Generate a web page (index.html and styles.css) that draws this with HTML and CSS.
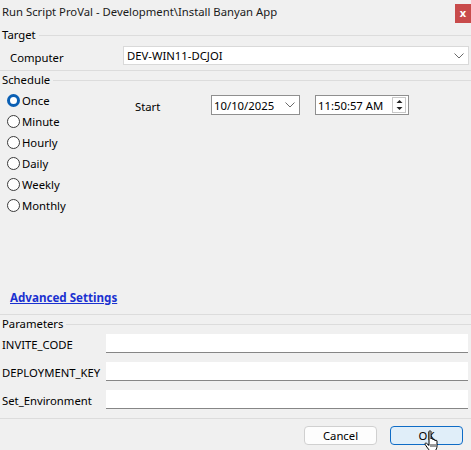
FILE: index.html
```html
<!DOCTYPE html>
<html>
<head>
<meta charset="utf-8">
<link rel="stylesheet" href="styles.css">
</head>
<body>
<div class="dialog">
  <div class="titlebar">
    <span class="title">Run Script ProVal - Development\Install Banyan App</span>
    <span class="close">x</span>
  </div>

  <div class="legend legend-target"><span>Target</span><i></i></div>
  <div class="target-row">
    <span class="lbl-computer">Computer</span>
    <div class="combo">
      <span>DEV-WIN11-DCJOI</span>
      <svg class="chev" width="10" height="6" viewBox="0 0 10 6"><path d="M0.5 0.5 L5 5 L9.5 0.5" fill="none" stroke="#6a6a6a" stroke-width="1"/></svg>
    </div>
  </div>
  <div class="sep sep-target"></div>

  <div class="legend"><span>Schedule</span><i></i></div>
  <div class="schedule">
    <div class="radios">
      <label class="radio checked"><span class="dot"></span>Once</label>
      <label class="radio"><span class="dot"></span>Minute</label>
      <label class="radio"><span class="dot"></span>Hourly</label>
      <label class="radio"><span class="dot"></span>Daily</label>
      <label class="radio"><span class="dot"></span>Weekly</label>
      <label class="radio"><span class="dot"></span>Monthly</label>
    </div>
    <div class="start-row">
      <span class="lbl-start">Start</span>
      <div class="datebox">
        <span>10/10/2025</span>
        <svg class="chev" width="10" height="6" viewBox="0 0 10 6"><path d="M0.5 0.5 L5 5 L9.5 0.5" fill="none" stroke="#6a6a6a" stroke-width="1"/></svg>
      </div>
      <div class="timebox">
        <span>11:50:57 AM</span>
        <div class="spin">
          <svg width="11" height="7" viewBox="0 0 11 7"><path d="M2.5 5 L5.5 2 L8.5 5 Z" fill="#222"/></svg>
          <svg width="11" height="7" viewBox="0 0 11 7"><path d="M2.5 2 L5.5 5 L8.5 2 Z" fill="#222"/></svg>
        </div>
      </div>
    </div>
  </div>
  <div class="adv-wrap"><a class="adv" href="#">Advanced Settings</a></div>
  <div class="sep sep-adv"></div>

  <div class="legend"><span>Parameters</span><i></i></div>
  <div class="params">
    <div class="param"><span class="plbl">INVITE_CODE</span><div class="pinput"></div></div>
    <div class="param"><span class="plbl">DEPLOYMENT_KEY</span><div class="pinput"></div></div>
    <div class="param"><span class="plbl">Set_Environment</span><div class="pinput"></div></div>
  </div>
  <div class="sep sep-params"></div>

  <div class="buttons">
    <button class="btn">Cancel</button>
    <button class="btn btn-ok">OK</button>
  </div>

  <svg class="cursor" width="20" height="22" viewBox="0 0 20 22">
    <path d="M5 1.5 C5 0.6 7 0.6 7 1.5 L7 9 C7 8 9 8 9 9 L9 10 C9 9 11 9 11 10 L11 11 C11 10 13 10 13 11 L13 16 C13 18 12 20 11 21 L6 21 C5 20 2 16 1.2 14.5 C0.6 13.5 1.6 12.5 2.6 13.3 L5 15.5 Z" fill="#fff" stroke="#000" stroke-width="1" stroke-linejoin="round"/>
    <path d="M7 14 V17 M9 14 V17 M11 14 V17" stroke="#000" stroke-width="0.8"/>
  </svg>
</div>
</body>
</html>
```

FILE: styles.css
```css
* { box-sizing: border-box; }
html, body { margin: 0; padding: 0; }
body {
  background: #f0f0f0;
  font-family: "Segoe UI", "Noto Sans", "Liberation Sans", sans-serif;
  font-size: 11.3px;
  color: #000;
  width: 471px;
  height: 450px;
  overflow: hidden;
}
.dialog { position: relative; width: 471px; height: 450px; }

.titlebar {
  height: 24px;
  display: flex;
  align-items: center;
  justify-content: space-between;
  padding-left: 2px;
}
.title { font-size: 11.3px; line-height: 16px; margin-top: -1px; color: #1a1a1a; }
.close {
  width: 16px;
  height: 19px;
  margin-top: 4px;
  align-self: flex-start;
  background: #c84b4b;
  color: #fff;
  font-weight: bold;
  font-size: 11px;
  line-height: 17px;
  text-align: center;
}

.legend {
  height: 16px;
  display: flex;
  align-items: center;
  padding-left: 2px;
  margin-top: 1px;
}
.legend-target { margin-top: 3px; }
.legend span { line-height: 16px; padding-right: 3px; }
.legend i { flex: 1; height: 1px; background: #dcdcdc; }

.sep { height: 1px; background: #dcdcdc; }

.target-row {
  display: flex;
  align-items: center;
  margin-top: 3px;
  height: 19px;
}
.lbl-computer { width: 123px; padding-left: 10px; margin-top: 4px; }
.combo {
  width: 346px;
  height: 19px;
  background: #fff;
  border: 1px solid #d9d9d9;
  display: flex;
  align-items: center;
  justify-content: space-between;
  padding: 0 4px 0 3px;
}
.combo span { line-height: 16px; }
.sep-target { margin-top: 5px; }

.schedule {
  display: flex;
  height: 192px;
}
.radios {
  width: 135px;
  padding-top: 2px;
  padding-left: 7px;
  display: flex;
  flex-direction: column;
}
.radio {
  height: 21px;
  display: flex;
  align-items: center;
  gap: 2px;
}
.dot {
  width: 13px;
  height: 13px;
  border-radius: 50%;
  border: 1px solid #3a3a3a;
  background: #fff;
  box-sizing: border-box;
}
.checked .dot {
  border: 3.5px solid #0a5fb4;
  background: #fff;
}

.start-row {
  display: flex;
  align-items: center;
  margin-top: 7px;
  height: 20px;
}
.lbl-start { width: 76px; margin-top: 2px; }
.datebox, .timebox {
  height: 20px;
  background: #fff;
  border: 1px solid #8f8f8f;
  display: flex;
  align-items: center;
  justify-content: space-between;
  padding-left: 2px;
}
.datebox { width: 89px; padding-right: 4px; }
.timebox { width: 94px; margin-left: 15px; padding-right: 2px; }
.spin {
  width: 14px;
  height: 16px;
  border: 1px solid #c8c8c8;
  display: flex;
  flex-direction: column;
  align-items: center;
  justify-content: center;
}
.spin svg { display: block; width: 11px; height: 7px; }

.adv-wrap {
  height: 34px;
  padding-left: 10px;
  display: flex;
  align-items: center;
}
.adv {
  color: #1a31d0;
  font-weight: bold;
  font-size: 11.6px;
  text-decoration: underline;
}
.sep-adv { margin-top: 0; }

.params { padding-top: 2px; }
.param {
  display: flex;
  align-items: center;
  height: 19px;
  margin-bottom: 9px;
}
.plbl { width: 106px; padding-left: 2px; margin-top: 1px; }
.pinput {
  width: 362px;
  height: 19px;
  background: #fff;
  border-bottom: 1px solid #868686;
}
.sep-params { margin-top: 0; }

.buttons {
  display: flex;
  justify-content: flex-end;
  gap: 13px;
  padding-right: 8px;
  margin-top: 7px;
}
.btn {
  width: 73px;
  height: 19px;
  font-family: inherit;
  font-size: 11.3px;
  background: #fdfdfd;
  border: 1px solid #d0d0d0;
  border-radius: 4px;
  padding: 0;
  line-height: 16px;
  color: #000;
}
.btn-ok {
  background: #e0eef9;
  border: 1px solid #0f6cc6;
}

.cursor {
  position: absolute;
  left: 424px;
  top: 430px;
}
```
